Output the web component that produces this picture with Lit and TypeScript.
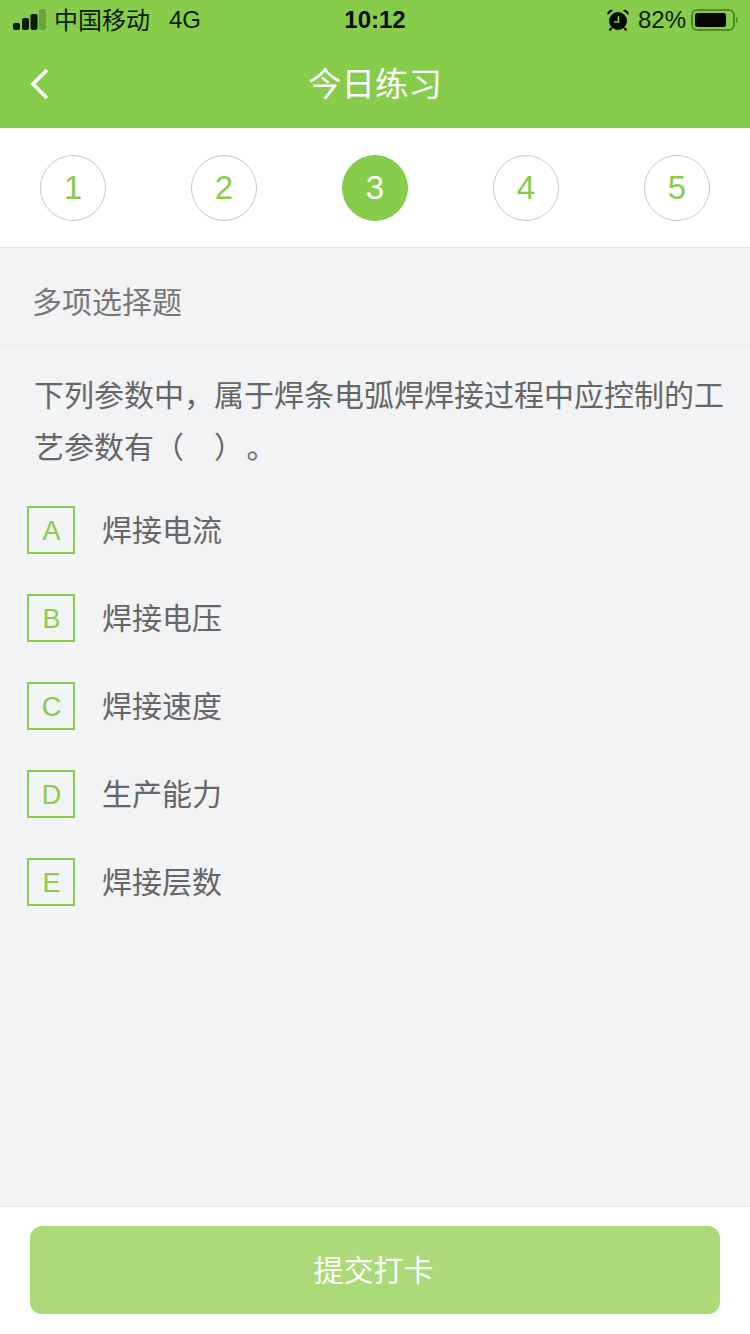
import { LitElement, html, css } from "lit";
import { customElement } from "lit/decorators.js";

const OPTIONS: [string, string][] = [
  ["A", "焊接电流"],
  ["B", "焊接电压"],
  ["C", "焊接速度"],
  ["D", "生产能力"],
  ["E", "焊接层数"],
];

@customElement("app-root")
export class AppRoot extends LitElement {
  static styles = css`
    :host {
      display: flex;
      flex-direction: column;
      width: 750px;
      height: 1334px;
      overflow: hidden;
      background: #f2f3f5;
      font-family: "Liberation Sans", "Noto Sans CJK SC", sans-serif;
    }
    .header { height: 128px; background: #87cd4b; display: flex; flex-direction: column; flex: none; }
    .status { height: 40px; display: grid; grid-template-columns: 1fr auto 1fr; align-items: center; color: #0b1a05; font-size: 24px; }
    .status-left { display: flex; align-items: center; padding-left: 13px; }
    .signal { display: block; }
    .carrier { margin-left: 8px; margin-top: -2px; line-height: 28px; font-family: "Noto Sans CJK SC", sans-serif; }
    .net { margin-left: 19px; line-height: 28px; }
    .time { font-weight: 700; font-size: 24px; color: #0a0f06; }
    .status-right { display: flex; align-items: center; justify-content: flex-end; padding-right: 12px; }
    .pct { margin-left: 9px; margin-right: 5px; font-size: 24px; }
    .nav { height: 88px; display: grid; grid-template-columns: 1fr auto 1fr; align-items: center; }
    .back { margin-left: 30px; display: block; margin-top: -1px; }
    .title { color: #fff; font-size: 33.5px; line-height: 40px; margin-top: 2px; }
    .steps { height: 120px; flex: none; box-sizing: border-box; background: #fff; border-bottom: 1px solid #e8e9eb; padding: 27px 40px 0; display: flex; justify-content: space-between; align-items: flex-start; }
    .step { width: 66px; height: 66px; box-sizing: border-box; border: 1px solid #c8c8c8; border-radius: 50%; color: #87cd4b; font-size: 33px; display: flex; align-items: center; justify-content: center; }
    .step.on { background: #87cd4b; border-color: #87cd4b; color: #fff; }
    .type { height: 98px; flex: none; box-sizing: border-box; border-bottom: 1px solid #e9eaec; padding: 0 0 0 32px; display: flex; align-items: center; font-size: 30px; color: #777; }
    .type span { margin-top: 7px; }
    .question { flex: none; margin: 0; padding: 24px 20px 0 34px; font-size: 30px; line-height: 52px; color: #666; }
    .options { flex: 1; display: flex; flex-direction: column; gap: 40px; padding: 32px 0 0 27px; }
    .option { display: flex; align-items: center; height: 48px; }
    .letter { width: 48px; height: 48px; box-sizing: border-box; border: 2px solid #87cd4b; color: #87cd4b; font-size: 27px; display: flex; align-items: center; justify-content: center; padding: 3px 0 0 1px; }
    .label { margin-left: 27px; font-size: 30px; color: #666; margin-top: -5px; }
    .footer { height: 128px; flex: none; box-sizing: border-box; background: #fff; border-top: 1px solid #e8e9eb; padding: 19px 30px 0; }
    .submit { height: 88px; box-sizing: border-box; padding: 0 3px 4px 0; border-radius: 12px; background: #aadb78; color: #fff; font-size: 30px; display: flex; align-items: center; justify-content: center; }
  `;

  render() {
    return html`
      <div class="header">
        <div class="status">
          <div class="status-left">
            <svg class="signal" width="33" height="22" viewBox="0 0 33 22">
              <rect x="0" y="14" width="7" height="7" rx="2" fill="#0b1a05" />
              <rect x="9" y="9" width="7" height="12" rx="2" fill="#0b1a05" />
              <rect x="17.5" y="5" width="7" height="16" rx="2" fill="#0b1a05" />
              <rect x="26" y="0" width="7" height="21" rx="2" fill="#6ca340" />
            </svg>
            <span class="carrier">中国移动</span>
            <span class="net">4G</span>
          </div>
          <div class="time">10:12</div>
          <div class="status-right">
            <svg width="22" height="22" viewBox="0 0 22 22">
              <circle cx="11" cy="12" r="9" fill="#050a02" />
              <path d="M0.5 6 L6 1.5 L3.5 0.5 L0.5 3Z M21.5 6 L16 1.5 L18.5 0.5 L21.5 3Z" fill="#050a02" />
              <path d="M4.5 19 L2.5 21.5 M17.5 19 L19.5 21.5" stroke="#050a02" stroke-width="2.2" />
              <path d="M11.5 7 V13 H7" fill="none" stroke="#87cd4b" stroke-width="1.6" />
            </svg>
            <span class="pct">82%</span>
            <svg width="47" height="24" viewBox="0 0 47 24">
              <rect x="1" y="2" width="42" height="20" rx="5" fill="none" stroke="#53892a" stroke-width="2" />
              <rect x="4" y="5" width="31" height="14" rx="2.5" fill="#050505" />
              <rect x="45" y="9" width="1.5" height="6" rx="0.7" fill="#53892a" />
            </svg>
          </div>
        </div>
        <div class="nav">
          <svg class="back" width="20" height="32" viewBox="0 0 20 32">
            <path d="M17 2 L3 16 L17 30" fill="none" stroke="#fff" stroke-width="3.6" />
          </svg>
          <div class="title">今日练习</div>
          <div></div>
        </div>
      </div>
      <div class="steps">
        ${[1, 2, 3, 4, 5].map(
          (n) => html`<div class="step ${n === 3 ? "on" : ""}">${n}</div>`
        )}
      </div>
      <div class="type"><span>多项选择题</span></div>
      <p class="question">下列参数中，属于焊条电弧焊焊接过程中应控制的工艺参数有（　）&#8202;。</p>
      <div class="options">
        ${OPTIONS.map(
          ([k, v]) => html`<div class="option">
            <div class="letter">${k}</div>
            <div class="label">${v}</div>
          </div>`
        )}
      </div>
      <div class="footer"><div class="submit">提交打卡</div></div>
    `;
  }
}
